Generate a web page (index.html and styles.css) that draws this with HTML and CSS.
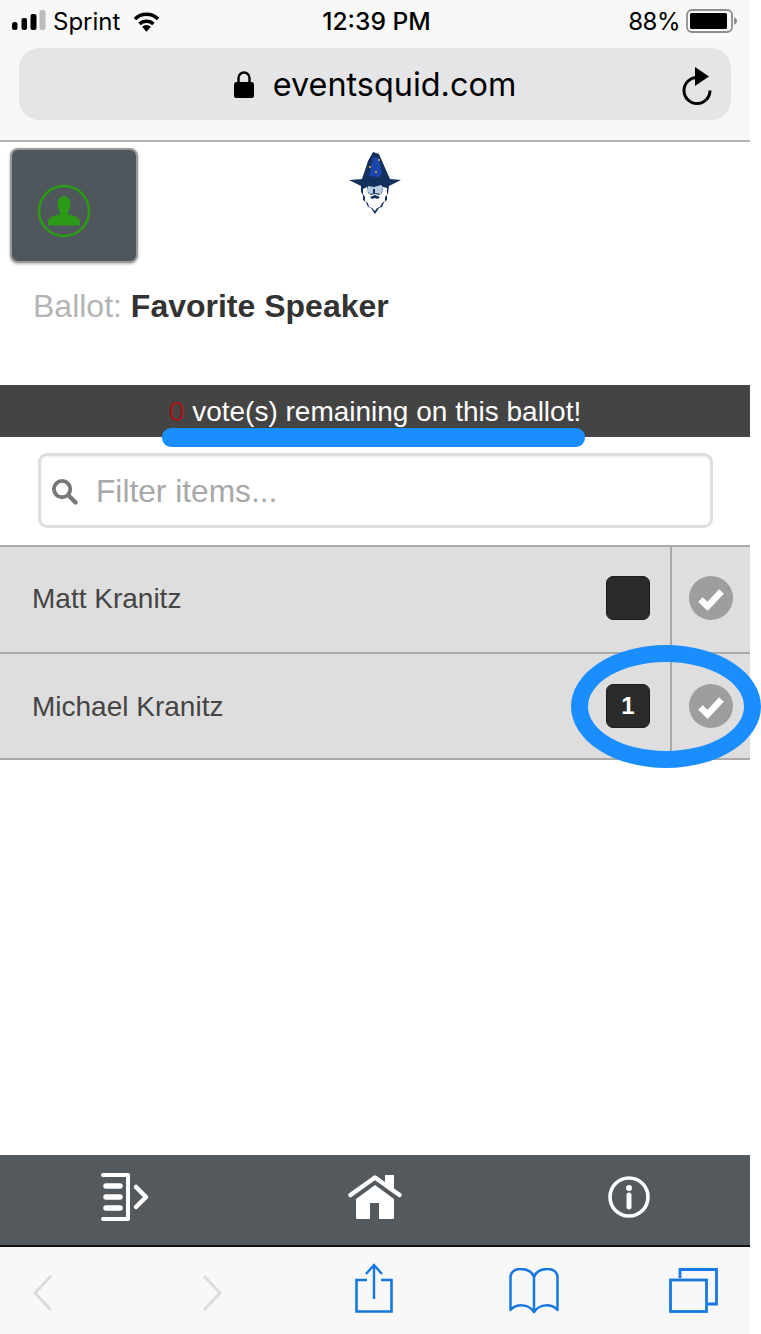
FILE: index.html
```html
<!DOCTYPE html>
<html lang="en">
<head>
<meta charset="utf-8">
<title>Favorite Speaker</title>
<link rel="stylesheet" href="styles.css">
</head>
<body>
<div class="page">
  <header class="chrome">
    <div class="status">
      <div class="status-left">
        <svg class="signal" viewBox="0 0 34 20"><rect x="0" y="12" width="5.500" height="8" rx="2.500" fill="#000"/><rect x="9.500" y="8" width="5.500" height="12" rx="2" fill="#000"/><rect x="18.500" y="4" width="6" height="16" rx="2" fill="#000"/><rect x="27.500" y="0" width="6" height="20" rx="2" fill="#bdbdbd"/></svg>
        <span>Sprint</span>
        <svg class="wifi" viewBox="0 0 28 21"><path d="M2 8a17 17 0 0 1 24 0" fill="none" stroke="#000" stroke-width="3.600"/><path d="M6.800 13a10.500 10.500 0 0 1 14.400 0" fill="none" stroke="#000" stroke-width="3.600"/><path d="M14 21l-4.600-5a6.400 6.400 0 0 1 9.200 0z" fill="#000"/></svg>
      </div>
      <div class="status-time">12:39 PM</div>
      <div class="status-right">
        <span class="status-pct">88%</span>
        <svg class="battery" viewBox="0 0 52 24"><rect x="1" y="1" width="45" height="22" rx="5" fill="none" stroke="#8e8e8e" stroke-width="1.800"/><rect x="4" y="4" width="37" height="16" rx="1.500" fill="#000"/><path d="M48 8.500c2 .4 3 1.800 3 3.500s-1 3.100-3 3.500z" fill="#8e8e8e"/></svg>
      </div>
    </div>
    <div class="urlbar">
      <div class="url-center">
        <svg class="lock" viewBox="0 0 20 28"><path d="M4.500 13V8a5.500 5.500 0 0 1 11 0v5" fill="none" stroke="#000" stroke-width="2.400"/><rect x="0" y="12" width="20" height="16" rx="2.500" fill="#000"/></svg>
        <span>eventsquid.com</span>
      </div>
      <svg class="reload" viewBox="0 0 32 38"><path d="M17 10.500a13 13 0 1 0 13 13" fill="none" stroke="#000" stroke-width="3"/><path d="M15 0l14 9.500-14 9.500z" fill="#000"/></svg>
    </div>
  </header>

  <main class="content">
    <div class="top">
      <button class="avatar" type="button" aria-label="Profile">
        <svg viewBox="0 0 54 54"><circle cx="27" cy="27" r="25" fill="none" stroke="#2b9a17" stroke-width="2.600"/><path d="M27 12c4.500 0 6.500 4 6.500 8 0 3.500-1.500 6-2.500 8v2c2 1.500 10 1.500 11.500 6 .5 1.500.7 3 .5 5.500H11c-.2-2.500 0-4 .5-5.500C13 31.500 21 31.500 23 30v-2c-1-2-2.500-4.500-2.500-8 0-4 2-8 6.500-8z" fill="#2b9a17"/></svg>
      </button>
      <svg class="logo" viewBox="0 0 52 62">
        <path d="M24 0l6 2 3 7 8 18 11 1-12 6-1 7-1 2 0 5-3 2-2 5-3 1-4 6-4-6-3-1-2-5-3-2 0-5-2-3 0-6L0 28l13-1 6-18z" fill="#14305c"/>
        <path d="M24 5l6 1 3 15-3 4-10-1 2-11z" fill="#1c45ad"/>
        <circle cx="30" cy="8" r="1" fill="#d8b43c"/><circle cx="21" cy="15" r="1" fill="#d8b43c"/><circle cx="27" cy="20" r="1" fill="#d8b43c"/>
        <path d="M14 37l4-2 1 6 3 2 4-1 4 1 3-2 1-6 4 1 0 7-2 2 0 4-3 2-2 4-3 1-2 3-3-3-3-1-1-4-3-2 0-4-2-3z" fill="#fff"/>
        <path d="M19 34l6 1 7-2 2 2-2 7-6-1-5 1-3-3z" fill="#b9d0e4"/>
        <path d="M24 37l2 0 0 4-2 0z" fill="#14305c"/>
        <path d="M21 45l5-2 5 2-2 2-3-1-3 1z" fill="#14305c"/>
      </svg>
    </div>
    <h1 class="title"><span class="title-label">Ballot:</span> Favorite Speaker</h1>
    <div class="votes"><b class="votes-count">0</b> vote(s) remaining on this ballot!<i class="underline"></i></div>
    <div class="filter">
      <svg class="search" viewBox="0 0 28 28"><circle cx="11.500" cy="11.500" r="8.500" fill="none" stroke="#777" stroke-width="4"/><path d="M18 18l7.500 7.500" stroke="#777" stroke-width="4.400" stroke-linecap="round"/></svg>
      <span class="placeholder">Filter items...</span>
    </div>
    <ul class="list">
      <li class="row row-first">
        <span class="name">Matt Kranitz</span>
        <span class="count"></span>
        <span class="action"><svg class="check" viewBox="0 0 44 44"><circle cx="22" cy="22" r="22" fill="#9e9e9e"/><path d="M11.500 23.500l7 7 14-15" fill="none" stroke="#fff" stroke-width="6.400"/></svg></span>
      </li>
      <li class="row row-last">
        <span class="name">Michael Kranitz</span>
        <span class="count">1</span>
        <span class="action"><svg class="check" viewBox="0 0 44 44"><circle cx="22" cy="22" r="22" fill="#9e9e9e"/><path d="M11.500 23.500l7 7 14-15" fill="none" stroke="#fff" stroke-width="6.400"/></svg></span>
        <i class="ring"></i>
      </li>
    </ul>
  </main>

  <nav class="appnav">
    <svg class="nav-list" viewBox="0 0 50 48"><path d="M3 2h25v44H3" fill="none" stroke="#fff" stroke-width="4" stroke-linecap="round" stroke-linejoin="round"/><path d="M6 13h14M6 24h14M6 35h14" stroke="#fff" stroke-width="5.500" stroke-linecap="round"/><path d="M36 14l10 10-10 10" fill="none" stroke="#fff" stroke-width="4.500" stroke-linecap="round" stroke-linejoin="round"/></svg>
    <svg class="nav-home" viewBox="0 0 54 44"><path d="M2.500 20L27 2.500 51.500 20" fill="none" stroke="#fff" stroke-width="4.500" stroke-linecap="round" stroke-linejoin="round"/><path d="M37 0h9v16l-9-7z" fill="#fff"/><path d="M27 10l19 14v18.500a1.500 1.500 0 0 1-1.500 1.500H31V28h-9v16H9.500A1.500 1.500 0 0 1 8 42.500V24z" fill="#fff"/></svg>
    <svg class="nav-info" viewBox="0 0 42 42"><circle cx="21" cy="21" r="19" fill="none" stroke="#fff" stroke-width="3.600"/><circle cx="21" cy="12" r="3" fill="#fff"/><path d="M21 19v12" stroke="#fff" stroke-width="5" stroke-linecap="round"/></svg>
  </nav>

  <footer class="toolbar">
    <svg class="tb-chevron tb-back" viewBox="0 0 20 36"><path d="M18 1L2 18l16 17" fill="none" stroke="#dcdcdc" stroke-width="3"/></svg>
    <svg class="tb-chevron tb-forward" viewBox="0 0 20 36"><path d="M2 1l16 17L2 35" fill="none" stroke="#dcdcdc" stroke-width="3"/></svg>
    <svg class="tb-share" viewBox="0 0 38 50"><path d="M12 17H1.500v31.500h35V17H26" fill="none" stroke="#1677e0" stroke-width="2.600"/><path d="M19 2v34M11 11l8-9 8 9" fill="none" stroke="#1677e0" stroke-width="2.400"/></svg>
    <svg class="tb-book" viewBox="0 0 50 46"><path d="M25 9C23 3 17 1 11 1 6 1 1.500 4 1.500 9v33C7 36 19 35 25 44c6-9 18-8 23.500-2V9C48.500 4 44 1 39 1c-6 0-12 2-14 8zM25 9v35" fill="none" stroke="#1677e0" stroke-width="2.500" stroke-linejoin="round"/></svg>
    <svg class="tb-tabs" viewBox="0 0 49 45"><path d="M11 10V1.500h36.500V36H39" fill="none" stroke="#1677e0" stroke-width="2.800"/><rect x="1.500" y="12" width="36" height="31.500" fill="none" stroke="#1677e0" stroke-width="2.800"/></svg>
  </footer>
</div>
</body>
</html>
```

FILE: styles.css
```css
* { box-sizing: border-box; }
html, body { margin: 0; padding: 0; background: #fff; }
body { font-family: "Liberation Sans", Arial, sans-serif; overflow: hidden; }
.page { width: 750px; height: 1334px; display: flex; flex-direction: column; position: relative; }

.chrome { height: 142px; flex: none; background: #f8f8f8; border-bottom: 2px solid #b4b4b4; padding-top: 6px; font-family: Inter, "Liberation Sans", sans-serif; color: #000; }
.status { display: grid; grid-template-columns: 1fr auto 1fr; align-items: center; height: 30px; padding: 0 12px; font-size: 24px; }
.status-left { display: flex; align-items: center; }
.signal { width: 34px; height: 20px; margin-right: 7px; margin-top: -2px; }
.wifi { width: 27px; height: 21px; margin-left: 13px; }
.status-time { font-size: 24.600px; font-weight: 500; padding-left: 3px; }
.status-right { display: flex; align-items: center; justify-content: flex-end; }
.status-pct { letter-spacing: -.5px; }
.battery { width: 52px; height: 24px; margin-left: 6px; }
.urlbar { height: 72px; margin: 12px 19px 0; background: #e5e5e8; border-radius: 20px; display: flex; align-items: center; justify-content: center; position: relative; font-size: 32.400px; }
.url-center { display: flex; align-items: center; gap: 19px; }
.lock { width: 20px; height: 28px; }
.reload { position: absolute; right: 19px; top: 19px; width: 32px; height: 38px; }

.content { flex: 1; min-height: 0; display: flex; flex-direction: column; }
.top { height: 120px; flex: none; display: flex; position: relative; }
.avatar { width: 128px; height: 115px; margin: 6px 0 0 10px; padding: 0; background: #50575c; border: 2px solid #999; border-radius: 8px; box-shadow: 0 1px 3px rgba(0,0,0,.3); display: flex; align-items: center; justify-content: center; }
.avatar svg { width: 54px; height: 54px; margin-right: 20px; margin-top: 10px; }
.logo { position: absolute; left: 349px; top: 10px; width: 52px; height: 62px; filter: blur(.4px); }
.title { margin: 26px 0 0 33px; font-size: 32px; line-height: 36px; font-weight: 700; color: #333; height: 97px; flex: none; }
.title-label { font-weight: 400; color: #b4b4b4; }
.votes { height: 52px; flex: none; background: #444; color: #fff; font-size: 28px; line-height: 54px; text-align: center; position: relative; }
.votes-count { font-weight: 400; color: #a31414; }
.underline { position: absolute; left: 162px; top: 43px; width: 423px; height: 19px; background: #1b8eff; border-radius: 9px; }
.filter { height: 75px; flex: none; margin: 16px 37px 0 38px; border: 3px solid #dedede; border-radius: 9px; display: flex; align-items: center; padding: 1px 0 0 10px; background: #fff; box-shadow: inset 0 1px 2px rgba(0,0,0,.08); }
.search { width: 27px; height: 27px; margin-right: 18px; }
.placeholder { font-size: 31.700px; color: #a8a8a8; padding-top: 1px; }
.list { list-style: none; margin: 17px 0 0; padding: 0; }
.row { height: 107px; background: #dedede; border-top: 2px solid #aaa; display: flex; align-items: center; position: relative; }
.row-first .name { margin-bottom: 2px; }
.row-first .count, .row-first .check { margin-bottom: 4px; }
.row-last { height: 108px; border-bottom: 2px solid #aaa; }
.row-last .name { padding-top: 2px; }
.name { flex: 1; padding-left: 32px; font-size: 28px; color: #444; }
.count { width: 44px; height: 44px; background: #2b2b2b; border-radius: 7px; border: 1px solid #1d1d1d; color: #fff; font-size: 24px; font-weight: 700; display: flex; align-items: center; justify-content: center; margin-right: 20px; }
.action { width: 80px; align-self: stretch; border-left: 2px solid #aaa; display: flex; align-items: center; justify-content: center; }
.check { width: 44px; height: 44px; }
.ring { position: absolute; left: 571px; top: -9px; width: 190px; height: 123px; border: 17px solid #1b8eff; border-radius: 50%; }

.appnav { height: 92px; flex: none; background: #53595d; border-bottom: 2px solid #111; padding-bottom: 6px; display: grid; grid-template-columns: repeat(3, 1fr); align-items: center; justify-items: center; }
.nav-list { width: 50px; height: 48px; }
.nav-home { width: 54px; height: 44px; }
.nav-info { width: 42px; height: 42px; margin-left: 8px; }
.toolbar { height: 87px; flex: none; background: #f8f8f8; display: flex; align-items: center; padding-left: 33px; }
.tb-chevron { width: 20px; height: 36px; margin-top: 4px; }
.tb-forward { margin-left: 149px; }
.tb-share { width: 38px; height: 50px; margin: -6px 0 0 133px; }
.tb-book { width: 50px; height: 46px; margin-left: 116px; }
.tb-tabs { width: 49px; height: 45px; margin-left: 110px; }
```
